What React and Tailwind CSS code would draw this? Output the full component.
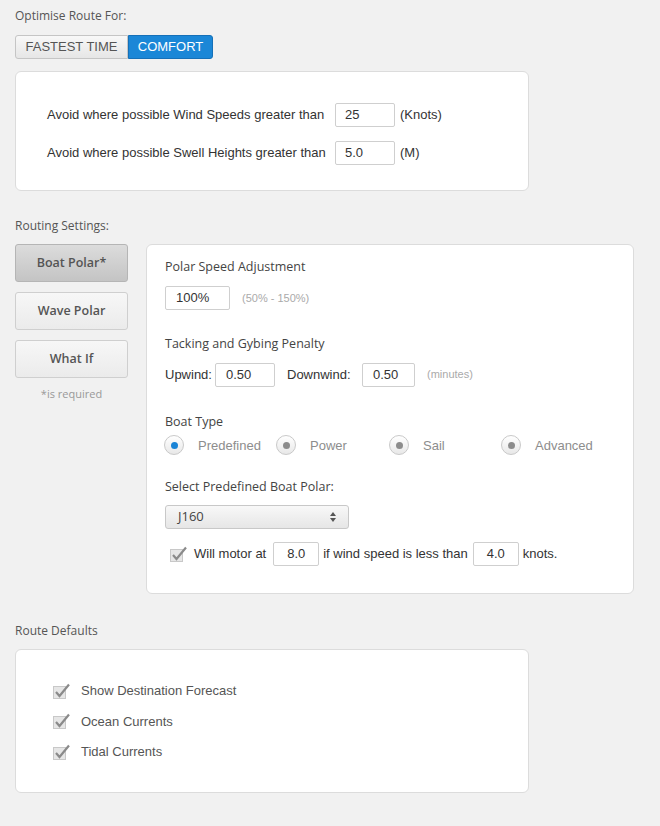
const H = { fontFamily: '"Open Sans", sans-serif' };
const B = { fontFamily: '"Liberation Sans", Arial, sans-serif' };

function Input({ v, w, className = "" }) {
  return (
    <div className={`h-[24px] bg-white border border-[#cfcfcf] rounded-[2px] flex items-center text-[13px] text-[#333] ${w} ${className}`} style={B}>
      {v}
    </div>
  );
}

function Check() {
  return (
    <svg width="18" height="16" viewBox="0 0 18 16" className="shrink-0">
      <rect x="0.5" y="3.5" width="12" height="12" fill="#e6e6e6" stroke="#c8c8c8" />
      <path d="M3 9 L6.5 13 L16 1.5" stroke="#8a8a8a" strokeWidth="2.2" fill="none" />
    </svg>
  );
}

function Radio({ on, label, w }) {
  return (
    <div className={`flex items-center ${w}`}>
      <div className="w-[20px] h-[20px] rounded-full border border-[#c9c9c9] bg-gradient-to-b from-white to-[#e8e8e8] flex items-center justify-center">
        <div className={`w-[7px] h-[7px] rounded-full ${on ? "bg-[#1a84d6]" : "bg-[#8c8c8c]"}`} />
      </div>
      <span className="ml-[14px] text-[13px] text-[#8d8d8d]" style={B}>{label}</span>
    </div>
  );
}

function SideBtn({ label, active }) {
  return (
    <div className={`h-[38px] w-[113px] rounded-[3px] border flex items-center justify-center text-[12.5px] font-semibold text-[#555] ${active ? "bg-gradient-to-b from-[#dcdcdc] to-[#c4c4c4] border-[#b5b5b5]" : "bg-gradient-to-b from-[#f7f7f7] to-[#ebebeb] border-[#cfcfcf]"}`} style={H}>
      {label}
    </div>
  );
}

export default function App() {
  return (
    <div className="w-[660px] h-[826px] bg-[#f1f1f1] px-[15px] pt-[7px] text-[#333]">
      <div className="text-[12px] text-[#555]" style={H}>Optimise Route For:</div>
      <div className="flex mt-[10px] h-[24px] text-[13px]" style={B}>
        <div className="w-[113px] flex items-center justify-center border border-[#c5c5c5] rounded-l-[3px] bg-gradient-to-b from-[#f8f8f8] to-[#e6e6e6] text-[#555]">FASTEST TIME</div>
        <div className="w-[85px] flex items-center justify-center border border-[#1570b8] rounded-r-[3px] bg-[#1b87d7] text-white">COMFORT</div>
      </div>
      <div className="mt-[12px] w-[514px] h-[120px] bg-white border border-[#dcdcdc] rounded-[6px] pl-[31px] pt-[31px] text-[13px]" style={B}>
        <div className="flex items-center">
          <span className="w-[288px]">Avoid where possible Wind Speeds greater than</span>
          <Input v="25" w="w-[60px]" className="pl-[9px]" />
          <span className="ml-[5px]">(Knots)</span>
        </div>
        <div className="flex items-center mt-[14px]">
          <span className="w-[288px]">Avoid where possible Swell Heights greater than</span>
          <Input v="5.0" w="w-[60px]" className="pl-[9px]" />
          <span className="ml-[5px]">(M)</span>
        </div>
      </div>

      <div className="mt-[26px] text-[12px] text-[#555]" style={H}>Routing Settings:</div>
      <div className="flex mt-[9px]">
        <div className="w-[131px] flex flex-col gap-[10px]">
          <SideBtn label="Boat Polar*" active />
          <SideBtn label="Wave Polar" />
          <SideBtn label="What If" />
          <div className="w-[113px] text-center text-[11px] text-[#999] -mt-[2px]" style={H}>*is required</div>
        </div>
        <div className="w-[488px] h-[350px] bg-white border border-[#dcdcdc] rounded-[6px] pl-[18px] pt-[13px]">
          <div className="text-[12.5px] text-[#444]" style={H}>Polar Speed Adjustment</div>
          <div className="flex items-center mt-[9px]">
            <Input v="100%" w="w-[65px]" className="pl-[10px]" />
            <span className="ml-[12px] text-[11px] text-[#aaa]" style={B}>(50% - 150%)</span>
          </div>
          <div className="mt-[25px] text-[12.5px] text-[#444]" style={H}>Tacking and Gybing Penalty</div>
          <div className="flex items-center mt-[9px] text-[13px]" style={B}>
            <span className="w-[50px]">Upwind:</span>
            <Input v="0.50" w="w-[60px]" className="pl-[10px]" />
            <span className="ml-[12px] w-[75px]">Downwind:</span>
            <Input v="0.50" w="w-[53px]" className="pl-[10px]" />
            <span className="ml-[12px] text-[11px] text-[#aaa]">(minutes)</span>
          </div>
          <div className="mt-[26px] text-[12.5px] text-[#444]" style={H}>Boat Type</div>
          <div className="flex mt-[4px] -ml-[1px]">
            <Radio on label="Predefined" w="w-[112px]" />
            <Radio label="Power" w="w-[113px]" />
            <Radio label="Sail" w="w-[112px]" />
            <Radio label="Advanced" w="w-[110px]" />
          </div>
          <div className="mt-[23px] text-[12.5px] text-[#444]" style={H}>Select Predefined Boat Polar:</div>
          <div className="mt-[8px] w-[184px] h-[24px] rounded-[3px] border border-[#c8c8c8] bg-gradient-to-b from-[#f8f8f8] to-[#e6e6e6] flex items-center justify-between pl-[12px] pr-[12px] text-[13px] text-[#444]" style={H}>
            <span>J160</span>
            <svg width="6" height="10" viewBox="0 0 6 10"><path d="M0 4 L3 0 L6 4 Z M0 6 L3 10 L6 6 Z" fill="#555" /></svg>
          </div>
          <div className="flex items-center mt-[13px] ml-[5px] text-[13px]" style={B}>
            <Check />
            <span className="ml-[6px]">Will motor at</span>
            <Input v="8.0" w="w-[46px]" className="justify-center ml-[7px]" />
            <span className="ml-[4px]">if wind speed is less than</span>
            <Input v="4.0" w="w-[46px]" className="justify-center ml-[5px]" />
            <span className="ml-[4px]">knots.</span>
          </div>
        </div>
      </div>

      <div className="mt-[28px] text-[12px] text-[#555]" style={H}>Route Defaults</div>
      <div className="mt-[9px] w-[514px] h-[144px] bg-white border border-[#dcdcdc] rounded-[6px] pl-[37px] pt-[31px] text-[13px] text-[#555]" style={B}>
        {["Show Destination Forecast", "Ocean Currents", "Tidal Currents"].map((t, i) => (
          <div key={t} className={`flex items-center ${i ? "mt-[11px]" : ""}`}>
            <Check />
            <span className="ml-[10px]">{t}</span>
          </div>
        ))}
      </div>
    </div>
  );
}
